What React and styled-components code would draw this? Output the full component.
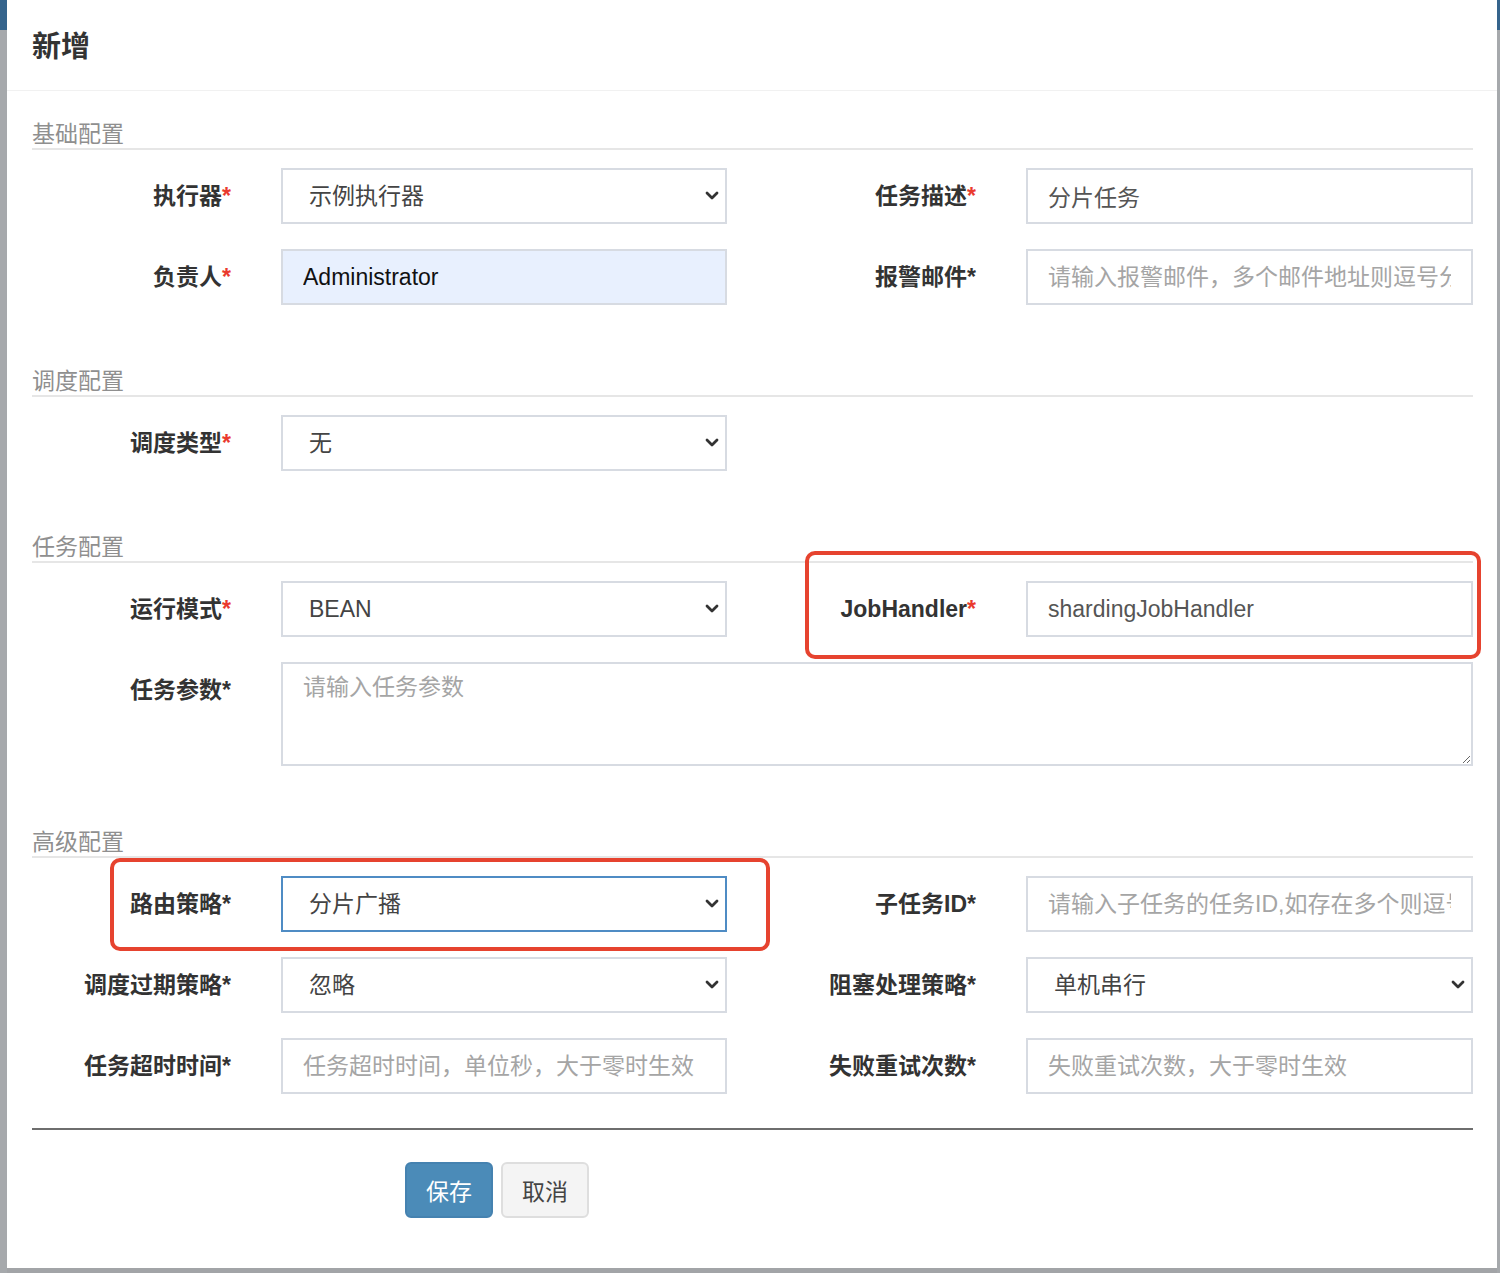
import React from "react";
import styled, { createGlobalStyle } from "styled-components";

const GlobalStyle = createGlobalStyle`
  html, body {
    margin: 0;
    padding: 0;
    background: #a2a4a7;
  }
  body {
    font-family: "Liberation Sans", "Noto Sans CJK SC", sans-serif;
    color: #333;
  }
  * { box-sizing: border-box; }
`;

const Backdrop = styled.div`
  display: flex;
  width: 1500px;
  height: 1273px;
  background: #a2a4a7;
  overflow: hidden;
`;
const SideStrip = styled.div`
  width: ${(p) => p.$w}px;
  flex-shrink: 0;
  background: linear-gradient(#35648c 0, #35648c 30px, #a6a9ac 30px);
`;
const Dialog = styled.div`
  width: 1490px;
  height: 1268px;
  background: #fff;
  flex-shrink: 0;
`;
const Header = styled.div`
  height: 91px;
  padding: 0 25px;
  display: flex;
  align-items: center;
  border-bottom: 1px solid #f1f1f1;
`;
const Title = styled.h4`
  margin: 0 0 3px;
  font-size: 29px;
  font-weight: 700;
  color: #333;
  font-family: "Noto Sans CJK SC", sans-serif;
`;
const Body = styled.div`
  padding: 25px 24px 50px 25px;
`;
const Legend = styled.div`
  font-family: "Noto Sans CJK SC", sans-serif;
  font-size: 23px;
  line-height: 32px;
  color: #8f8f8f;
  border-bottom: 2px solid #e6e6e6;
  margin: ${(p) => (p.$first ? "0" : "58px")} 0 18px;
`;
const Row = styled.div`
  position: relative;
  display: grid;
  grid-template-columns: 199px 446px 199px 1fr;
  column-gap: 50px;
  margin-bottom: 25px;
`;
const Label = styled.label`
  font-family: "Liberation Sans", "Noto Sans CJK SC", sans-serif;
  font-size: 23px;
  font-weight: 700;
  line-height: 56px;
  text-align: right;
  color: #333;
  white-space: nowrap;
`;
const Star = styled.span`
  color: ${(p) => (p.$red ? "#ea3a2e" : "#333")};
`;
const Input = styled.input`
  width: 100%;
  height: 56px;
  border: 2px solid #d7dbe2;
  border-radius: 0;
  padding: 0 20px;
  font-family: "Liberation Sans", "Noto Sans CJK SC", sans-serif;
  font-size: 23px;
  color: ${(p) => (p.$dark ? "#111" : "#555")};
  background: ${(p) => (p.$filled ? "#e8f0fe" : "#fff")};
  outline: none;
  &::placeholder {
    color: #a5a5a5;
  }
`;
const TextArea = styled.textarea`
  grid-column: 2 / 5;
  width: 100%;
  height: 104px;
  border: 2px solid #d7dbe2;
  border-radius: 0;
  padding: 4px 20px;
  font-family: "Noto Sans CJK SC", sans-serif;
  font-size: 23px;
  color: #555;
  outline: none;
  resize: vertical;
  &::placeholder {
    color: #a5a5a5;
  }
`;
const Select = styled.div`
  height: 56px;
  border: 2px solid ${(p) => (p.$focus ? "#4f8cc4" : "#d7dbe2")};
  padding: 0 4px 0 26px;
  display: flex;
  align-items: center;
  justify-content: space-between;
  font-family: "Liberation Sans", "Noto Sans CJK SC", sans-serif;
  font-size: 23px;
  line-height: 1;
  color: #444;
`;
const Chevron = styled.svg`
  width: 14px;
  height: 10px;
  margin-right: 2px;
`;
const Highlight = styled.div`
  position: absolute;
  top: ${(p) => p.$top}px;
  left: ${(p) => p.$left}px;
  width: ${(p) => p.$width}px;
  height: ${(p) => p.$height}px;
  border: 4px solid #e6432f;
  border-radius: 10px;
  pointer-events: none;
`;
const Divider = styled.div`
  margin-top: 34px;
  height: 2px;
  background: #6e6e6e;
`;
const Footer = styled.div`
  display: flex;
  gap: 8px;
  margin-top: 32px;
  padding-left: 373px;
`;
const Button = styled.button`
  height: 56px;
  width: 88px;
  border-radius: 6px;
  font-family: "Noto Sans CJK SC", sans-serif;
  font-size: 23px;
  cursor: pointer;
  border: 2px solid ${(p) => (p.$primary ? "#4582b0" : "#dedede")};
  background: ${(p) => (p.$primary ? "#4b8bb8" : "#f4f4f4")};
  color: ${(p) => (p.$primary ? "#fff" : "#444")};
`;

const Arrow = () => (
  <Chevron viewBox="0 0 14 10">
    <polyline points="2,2 7,7 12,2" fill="none" stroke="#333" strokeWidth="2.8" strokeLinecap="round" strokeLinejoin="round" />
  </Chevron>
);

const Field = ({ label, red }) => (
  <Label>
    {label}
    <Star $red={red}>*</Star>
  </Label>
);

const Sel = ({ value, focus }) => (
  <Select $focus={focus}>
    <span>{value}</span>
    <Arrow />
  </Select>
);

const App = () => {
  return (
    <>
      <GlobalStyle />
      <Backdrop>
        <SideStrip $w={7} />
        <Dialog>
          <Header>
            <Title>新增</Title>
          </Header>
          <Body>
            <Legend $first>基础配置</Legend>
            <Row>
              <Field label="执行器" red />
              <Sel value="示例执行器" />
              <Field label="任务描述" red />
              <Input readOnly value="分片任务" />
            </Row>
            <Row>
              <Field label="负责人" red />
              <Input readOnly value="Administrator" $filled $dark />
              <Field label="报警邮件" />
              <Input readOnly placeholder="请输入报警邮件，多个邮件地址则逗号分隔" />
            </Row>

            <Legend>调度配置</Legend>
            <Row>
              <Field label="调度类型" red />
              <Sel value="无" />
            </Row>

            <Legend>任务配置</Legend>
            <Row>
              <Field label="运行模式" red />
              <Sel value="BEAN" />
              <Field label="JobHandler" red />
              <Input readOnly value="shardingJobHandler" />
              <Highlight $top={-30} $left={773} $width={676} $height={108} />
            </Row>
            <Row>
              <Field label="任务参数" />
              <TextArea readOnly placeholder="请输入任务参数" />
            </Row>

            <Legend>高级配置</Legend>
            <Row>
              <Field label="路由策略" />
              <Sel value="分片广播" focus />
              <Field label="子任务ID" />
              <Input readOnly placeholder="请输入子任务的任务ID,如存在多个则逗号分隔" />
              <Highlight $top={-18} $left={78} $width={660} $height={93} />
            </Row>
            <Row>
              <Field label="调度过期策略" />
              <Sel value="忽略" />
              <Field label="阻塞处理策略" />
              <Sel value="单机串行" />
            </Row>
            <Row>
              <Field label="任务超时时间" />
              <Input readOnly placeholder="任务超时时间，单位秒，大于零时生效" />
              <Field label="失败重试次数" />
              <Input readOnly placeholder="失败重试次数，大于零时生效" />
            </Row>

            <Divider />
            <Footer>
              <Button $primary>保存</Button>
              <Button>取消</Button>
            </Footer>
          </Body>
        </Dialog>
        <SideStrip $w={3} />
      </Backdrop>
    </>
  );
};

export default App;
